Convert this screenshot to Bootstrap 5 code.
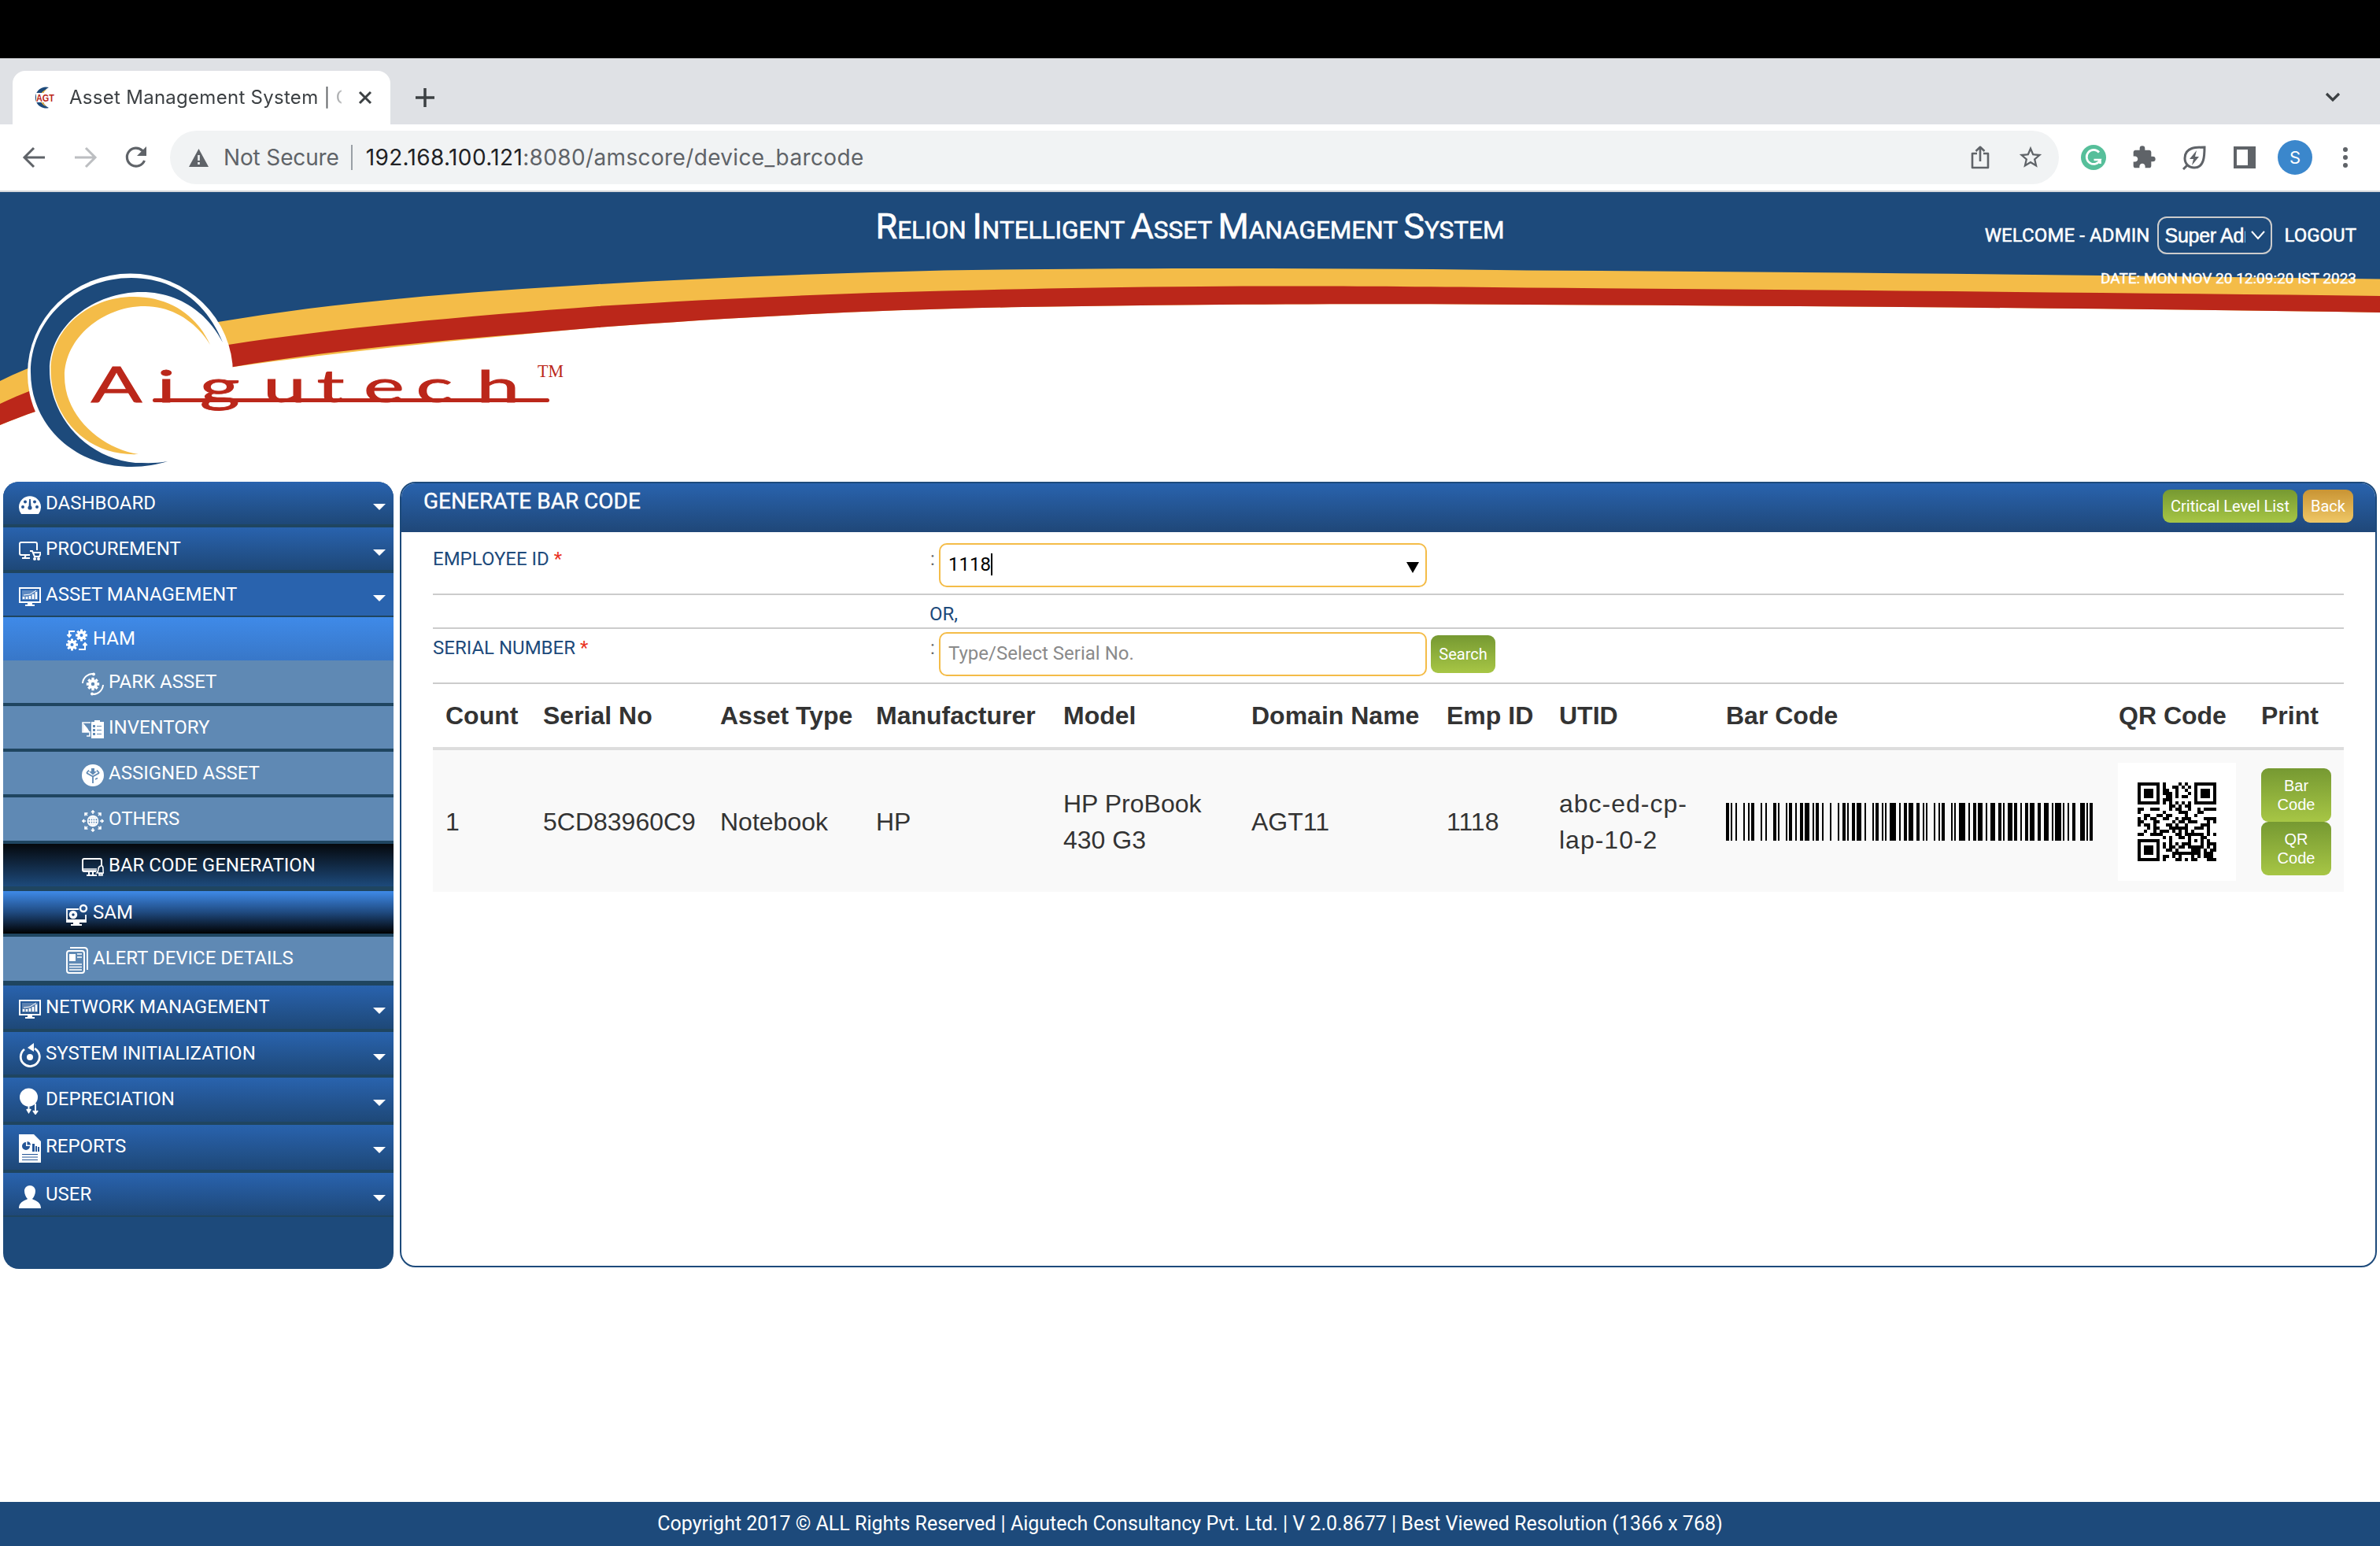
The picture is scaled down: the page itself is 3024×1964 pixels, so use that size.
<!DOCTYPE html>
<html lang="en">
<head>
<meta charset="utf-8">
<title>Asset Management System | Generate Bar Code</title>
<link href="https://cdn.jsdelivr.net/npm/bootstrap@5.3.0/dist/css/bootstrap.min.css" rel="stylesheet">
<style>
body{font-family:Roboto,"Liberation Sans",sans-serif;font-size:24px;line-height:28px;width:3024px;height:1964px;overflow:hidden;background:#fff;color:#333}
svg{display:block;flex:none}
.ui{font-family:Inter,"Liberation Sans",sans-serif}
.notch{height:74px;background:#000}
.tabstrip{height:84px;background:#dfe1e5;padding:16px 50px 0 16px}
.tab{position:relative;width:480px;height:68px;background:#fff;border-radius:16px 16px 0 0;padding:0 22px 0 25px}
.tabtitle{width:346px;font-size:24px;letter-spacing:.28px;color:#3c4043;white-space:nowrap;overflow:hidden;margin-left:17px;-webkit-mask-image:linear-gradient(90deg,#000 322px,transparent 356px)}
.newtab{margin:21px 0 0 31px}.tabmenu{margin-top:27px}
.toolbar{height:86px;border-bottom:2px solid #d6d8dc;padding:0 30px 0 28px}
.i-fwd{margin-left:36px}.i-reload{margin-left:34px}.i-star{margin-left:35px}
.i-gram{margin:0 32px 0 28px}.i-leaf{margin:0 34px 0 32px}
.omni{width:2400px;height:68px;border-radius:34px;background:#f1f3f4;margin-left:28px;padding:0 19px 0 24px;font-size:28px;color:#5f6368}
.omni .sep{width:2px;height:32px;background:#9aa0a6;margin:0 17px 0 15px}
.insecure{margin-left:19px;letter-spacing:-.15px}
.url{letter-spacing:.36px}.url b{font-weight:400;color:#202124}
.avatar-s{width:44px;height:44px;border-radius:50%;background:#3b87cc;color:#fff;font-size:22px;margin:0 28px}
.banner{height:368px;position:relative}
.banner>svg{position:absolute;left:0;top:0}
.banner-top{position:relative;height:130px;color:#fff}
.apptitle{position:absolute;left:0;right:0;top:16px;text-align:center;text-transform:uppercase;font-size:31.500px;line-height:56px;-webkit-text-stroke:.6px #fff}
.apptitle b{font-weight:400;font-size:45px}
.userbox{position:absolute;right:30px;top:31px;font-size:24px;-webkit-text-stroke:.5px #fff}
.userbox .who{letter-spacing:.1px}
.datebox{position:absolute;right:30px;top:96px;font-size:19px;-webkit-text-stroke:.4px #fff}
.rolesel{width:146px;height:48px;border:2px solid #ccc;border-radius:12px;margin:0 16px 0 9px;padding:0 7px 0 8px;font-family:"Liberation Sans",sans-serif;font-size:25px}
.rolesel span{width:102px;overflow:hidden;white-space:nowrap;letter-spacing:-.3px}
.sidebar{width:496px;height:1000px;margin-left:4px;border-radius:20px;background:#1d4a7b;overflow:hidden;color:#fff}
.mi{border-bottom:4px solid #1f4560;padding:13px 10px 0 20px;background:linear-gradient(#2963ae,#1e4878);height:58px}
.mi .ic{width:28px;height:34px;margin-right:6px;display:flex;align-items:center}
.caret{width:0;height:0;border:8px solid transparent;border-top-color:#fff;border-bottom:0;margin:15px 0 0 auto}
.lvl2{padding-left:80px;background:#5f89b4}.lvl3{padding-left:100px;background:#5f89b4}
.h59{height:59px}.h60{height:60px}.h61{height:61px}
.mi-open{background:#2963ae;border-bottom-width:2px;height:56px}
.mi-ham{background:linear-gradient(#3f8ae8,#3877c8);border:0;height:55px}
.mi-now{background:linear-gradient(#05080c,#1d4a7b);border-bottom-width:6px;height:60px}
.mi-sam{background:linear-gradient(#3f8ae8,#1f4a80 50%,#000)}
.mi-alert{border-bottom-width:6px;height:62px}
.mi-last{height:56px;border-bottom-width:2px}
.panel{width:2512px;height:998px;border:2px solid #1d4a7b;border-radius:20px;margin-left:8px;overflow:hidden}
.panelhead{height:62px;background:linear-gradient(#2963ae,#1f4778);color:#fff;padding:0 28px}
.panelhead h1{font-size:28px;line-height:32px;margin:7px 0 0;font-weight:400;-webkit-text-stroke:.4px #fff}
.gbtn{border:0;border-radius:9px;color:#fff;background:linear-gradient(#769932,#a7c645);font-size:20px;line-height:24px;text-align:center;padding:0}
.b-crit{width:171px;height:42px;margin-top:8px}
.b-back{width:64px;height:42px;margin:8px 0 0 7px;background:linear-gradient(#c99434,#efc766)}
.b-find{width:82px;height:48px;margin:8px 0 0 5px}
.b-print{width:89px;height:68px}
.formarea{margin:0 40px;color:#1d4a7b}
.frow{border-bottom:2px solid #ccc}
.f-emp{height:80px}.f-or{height:43px}.f-ser{height:70px}
.flabel{width:632px}.fcolon{width:11px;color:#666}
.f-emp .flabel,.f-emp .fcolon{padding-top:20px}
.f-ser .flabel,.f-ser .fcolon{padding-top:10px}
.f-or div{padding:10px 0 0 631px}
.finput{width:620px;height:56px;border:2px solid #f4bc48;border-radius:10px;padding:0 8px 3px 10px;color:#000}
.f-emp .finput{margin-top:14px}.f-ser .finput{margin-top:4px;color:#8a8a8a}
.req{color:#ea3323}
.caretline{width:2px;height:28px;background:#000}
.devices{font-family:"Liberation Sans",sans-serif;font-size:32px;line-height:46px;color:#333;table-layout:fixed;width:2428px;margin:0}
.devices th,.devices td{padding:0 16px;vertical-align:middle;border:0;color:#333;box-shadow:none;white-space:nowrap}
.devices th{height:82px;border-bottom:4px solid #ddd;background:#fff}
.devices td{height:182px;background:#f9f9f9;padding-top:1px}
.devices td.utid{letter-spacing:1px}.devices td.qrcell{padding-left:15px}
.w1{width:124px}.w2{width:225px}.w3{width:198px}.w4{width:238px}.w5{width:239px}.w6{width:248px}.w7{width:143px}.w8{width:212px}.w9{width:499px}.w10{width:181px}.w11{width:121px}
.qrbox{width:150px;height:150px;background:#fff;padding:25px}
.pagefoot{height:56px;background:#1d4a7b;color:#fff;font-size:25px;line-height:55px;text-align:center;margin-top:296px}
</style>
</head>
<body>
<div class="notch"></div>
<div class="tabstrip ui d-flex align-items-start">
  <div class="tab d-flex align-items-center">
    <svg width="30" height="30" viewBox="0 0 30 30"><path d="M21 2A13.500 13.500 0 1 0 21 28A14.500 14.500 0 0 1 21 2" fill="#1d4a7b"/><path d="M19 4.500A11 11 0 0 0 18 26A12.500 12.500 0 0 1 19 4.500" fill="#f4b942"/><path d="M5 9h24v12H5z" fill="#fff"/><text x="5" y="19.500" font-family="Liberation Sans" font-weight="700" font-size="12" textLength="23" lengthAdjust="spacingAndGlyphs" fill="#bb271a">AGT</text></svg>
    <div class="tabtitle">Asset Management System | Generate</div>
    <svg class="ms-auto" width="20" height="20" viewBox="0 0 20 20"><path d="M3 3l14 14M17 3L3 17" stroke="#3c4043" stroke-width="3"/></svg>
  </div>
  <svg class="newtab" width="26" height="26" viewBox="0 0 26 26"><path d="M13 1v24M1 13h24" stroke="#3c4043" stroke-width="3.500"/></svg>
  <svg class="tabmenu ms-auto" width="20" height="14" viewBox="0 0 20 14"><path d="M2 2l8 8 8-8" stroke="#3c4043" stroke-width="3.200" fill="none"/></svg>
</div>
<div class="toolbar ui d-flex align-items-center">
  <svg width="30" height="28" viewBox="0 0 30 28"><path d="M29 14H4M15 2L3 14l12 12" fill="none" stroke="#5f6368" stroke-width="3"/></svg>
  <svg class="i-fwd" width="30" height="28" viewBox="0 0 30 28"><path d="M1 14h25M15 2l12 12-12 12" fill="none" stroke="#bcbec1" stroke-width="3"/></svg>
  <svg class="i-reload" width="30" height="30" viewBox="0 0 30 30"><path d="M25.500 19A11.500 11.500 0 1 1 23 6.500L26 10" fill="none" stroke="#5f6368" stroke-width="3.200"/><path d="M28 1v12H16z" fill="#5f6368"/></svg>
  <div class="omni d-flex align-items-center">
    <svg width="25" height="23" viewBox="0 0 25 23"><path d="M12.500 0L25 23H0z" fill="#5f6368"/><path d="M12.500 8v7M12.500 17v3" stroke="#f1f3f4" stroke-width="2.600"/></svg>
    <span class="insecure">Not Secure</span><span class="sep"></span>
    <span class="url"><b>192.168.100.121</b>:8080/amscore/device_barcode</span>
    <svg class="ms-auto" width="24" height="30" viewBox="0 0 24 30"><path d="M8 10H2v18h20V10h-6M12 20V2M6.500 7L12 1.800 17.500 7" fill="none" stroke="#5f6368" stroke-width="2.600" stroke-linejoin="round"/></svg>
    <svg class="i-star" width="34" height="34" viewBox="0 0 24 24"><path d="M22 9.240l-7.190-.62L12 2 9.190 8.630 2 9.240l5.460 4.730L5.820 21 12 17.270 18.180 21l-1.630-7.030L22 9.240zM12 15.400l-3.760 2.270 1-4.280-3.320-2.880 4.380-.38L12 6.100l1.710 4.040 4.380.38-3.320 2.880 1 4.280L12 15.400z" fill="#5f6368"/></svg>
  </div>
  <svg class="i-gram" width="32" height="32" viewBox="0 0 32 32"><circle cx="16" cy="16" r="16" fill="#56bf9a"/><path d="M23 9.500A9 9 0 1 0 24.500 19H16.500M24.500 18v6" fill="none" stroke="#fff" stroke-width="2.700"/></svg>
  <svg width="32" height="32" viewBox="0 0 24 24"><path d="M20.500 11H19V7c0-1.100-.9-2-2-2h-4V3.500a2.500 2.500 0 0 0-5 0V5H4c-1.100 0-1.990.9-1.990 2v3.800H3.500c1.490 0 2.700 1.210 2.700 2.700s-1.210 2.700-2.700 2.700H2V20c0 1.100.9 2 2 2h3.800v-1.500c0-1.490 1.210-2.700 2.700-2.700s2.700 1.210 2.700 2.700V22H17c1.100 0 2-.9 2-2v-4h1.500a2.500 2.500 0 0 0 0-5z" fill="#5f6368"/></svg>
  <svg class="i-leaf" width="32" height="32" viewBox="0 0 32 32"><path d="M29 3C18 3 4 3 4 17c0 7 5 12 12 12C29 29 29 13 29 3zM2 31l6-6" fill="none" stroke="#5f6368" stroke-width="3"/><path d="M19 7L10 18h5l-2 8 9-11h-5z" fill="#5f6368"/></svg>
  <svg width="28" height="28" viewBox="0 0 28 28"><path d="M0 0h28v28H0zM4 4v20h14V4z" fill-rule="evenodd" fill="#5f6368"/></svg>
  <div class="avatar-s d-flex align-items-center justify-content-center">S</div>
  <svg width="28" height="28" viewBox="0 0 28 28" fill="#5f6368"><circle cx="14" cy="4" r="3"/><circle cx="14" cy="14" r="3"/><circle cx="14" cy="24" r="3"/></svg>
</div>

<div class="banner">
  <svg width="3024" height="368" viewBox="0 244 3024 368">
    <path d="M0 244H3024V356C2700 350 2350 347 2000 345C1700 341 1400 341 1200 344.500C1050 348 900 354 760 362C590 372 430 384 277 410C180 428 90 441 0 485z" fill="#1d4a7b"/>
    <path d="M0 484C90 440 180 427 277 409C430 383 590 371 760 361C900 353 1050 347 1200 343.500C1400 340 1700 340 1940 343.500C2350 346 2700 350 3024 354.500V397C2700 392 2350 389 1940 387C1700 385 1500 387 1300 390C1100 394 930 403 760 416C600 430 450 445 297 466C190 487 95 500 0 540z" fill="#f4bc48"/>
    <path d="M0 513C90 470 190 456 290 438C430 416 600 401 760 389C900 380 1050 373 1200 369.500C1400 364 1600 361.500 1940 365.500C2350 368.500 2700 372 3024 376V397C2700 392 2350 389 1940 387C1700 385 1500 387 1300 390C1100 394 930 403 760 416C600 430 450 440 297 466C190 487 95 500 0 540z" fill="#bb271a"/>
    <ellipse cx="165.500" cy="474.500" rx="130.500" ry="127" fill="#fff"/>
    <path d="M283 435C262 383 220 353 167 353C95 353 39 407 39 473C39 540 95 593 167 593C185 593 200 590 213 586C200 589 185 588 172 588C110 582 63 530 63 470C63 413 120 371 180 371C225 371 262 395 283 435z" fill="#1d4a7b"/>
    <path d="M267 438C250 400 215 377 170 377C110 377 64.500 420 64.500 470C64.500 530 110 580 176 577C130 570 82 530 82 478C82 430 130 389 184 389C220 389 250 410 267 438z" fill="#f4bc48"/>
    <g fill="#bb271a" stroke="#bb271a">
      <text transform="translate(0 511) scale(1.550 1)" x="74.500" y="0" font-family="Lato" font-size="62" stroke-width=".8">A</text>
      <text transform="translate(0 511) scale(1.750 1)" x="114 145 191 230 264 302 346" y="0" font-family="Lato" font-size="56" stroke-width=".8">igutech</text>
      <rect x="194" y="506" width="504" height="5" rx="2.500" stroke="none"/>
      <text x="683" y="479" font-family="Liberation Serif" font-size="24" textLength="33" lengthAdjust="spacingAndGlyphs" stroke="none">TM</text>
    </g>
  </svg>
  <div class="banner-top">
    <div class="apptitle"><b>R</b>elion <b>I</b>ntelligent <b>A</b>sset <b>M</b>anagement <b>S</b>ystem</div>
    <div class="userbox d-flex align-items-center"><span class="who">WELCOME - ADMIN</span><div class="rolesel d-flex align-items-center justify-content-between"><span>Super Admin</span><svg width="18" height="12" viewBox="0 0 18 12"><path d="M1 1l8 9 8-9" fill="none" stroke="#fff" stroke-width="2"/></svg></div>LOGOUT</div>
    <div class="datebox">DATE: MON NOV 20 12:09:20 IST 2023</div>
  </div>
</div>

<svg class="position-absolute" width="0" height="0"><defs>
  <g id="gear"><circle r="5" fill="none" stroke="#fff" stroke-width="4.500"/><path d="M0-10v4M0 10v-4M-10 0h4M10 0h-4M-7-7l3 3M7 7l-3-3M-7 7l3-3M7-7l-3 3" stroke="#fff" stroke-width="4"/></g>
  <symbol id="chartmon" viewBox="0 0 28 24"><path d="M1 1h26v18H1z" fill="none" stroke="#fff" stroke-width="2"/><path d="M4 4h20v12H4z" fill="#fff" opacity=".25"/><path d="M6 15v-3M10 15v-3M14 15v-4M18 15V9M22 15V6" stroke="#fff" stroke-width="2.500"/><path d="M6 10l8-1 8-5" stroke="#fff" fill="none"/><path d="M11 19h6v3h3v2H8v-2h3z" fill="#fff"/></symbol>
</defs></svg>

<div class="d-flex align-items-start">
  <nav class="sidebar">
    <div class="mi d-flex"><span class="ic"><svg width="28" height="24" viewBox="0 0 28 24"><path d="M3 23A14 14 0 1 1 25 23z" fill="#fff"/><g fill="#245391"><circle cx="5" cy="14" r="2"/><circle cx="8" cy="7.500" r="2"/><circle cx="20" cy="7.500" r="2"/><circle cx="23" cy="14" r="2"/><circle cx="14" cy="15" r="2.600"/><path d="M13.200 4h1.600l.8 11h-3.200z"/></g></svg></span>DASHBOARD<i class="caret"></i></div>
    <div class="mi d-flex"><span class="ic"><svg width="28" height="24" viewBox="0 0 28 24" fill="none" stroke="#fff" stroke-width="2"><path d="M14 17H3q-2 0-2-2V3q0-2 2-2h18q2 0 2 2v8M4 21h10M9 17l-2 4M14 12h3l3 7h6l2-5H18"/><circle cx="20" cy="22" r="1"/><circle cx="25" cy="22" r="1"/></svg></span>PROCUREMENT<i class="caret"></i></div>
    <div class="mi mi-open d-flex"><span class="ic"><svg width="28" height="24"><use href="#chartmon"/></svg></span>ASSET MANAGEMENT<i class="caret"></i></div>
    <div class="mi lvl2 mi-ham d-flex"><span class="ic"><svg width="28" height="30" viewBox="0 0 28 30"><use href="#gear" transform="translate(19.500 8) scale(.75)"/><use href="#gear" transform="translate(7.500 20) scale(.75)"/><path d="M11 3H4v6M1.500 7L4 10l2.500-3M16 26h8v-7M21.500 21L24 18l2.500 3" fill="none" stroke="#fff" stroke-width="2"/></svg></span>HAM</div>
    <div class="mi lvl3 d-flex"><span class="ic"><svg width="28" height="30" viewBox="0 0 28 30"><use href="#gear" transform="translate(14 15) scale(.82)"/><path d="M1 14A13 13 0 0 1 15 2M27 16A13 13 0 0 1 13 28" fill="none" stroke="#fff" stroke-width="2"/><circle cx="15" cy="2.500" r="2" fill="#fff"/><circle cx="13" cy="27.500" r="2" fill="#fff"/></svg></span>PARK ASSET</div>
    <div class="mi lvl3 d-flex"><span class="ic"><svg width="28" height="24" viewBox="0 0 28 24"><path d="M11 3H1v12h10M6 20h4v-4" fill="none" stroke="#fff" stroke-width="1.600"/><path d="M2 4l5 6 3 5H2z" fill="#fff"/><path d="M12 2h4V0h7v2h5v21H12z" fill="#fff"/><path d="M14 6h3v3h-3zM14 11h3v3h-3zM14 16h3v3h-3zM19 7h6v1h-6zM19 12h6v1h-6zM19 17h6v1h-6z" fill="#5f89b4"/></svg></span>INVENTORY</div>
    <div class="mi lvl3 d-flex"><span class="ic"><svg width="28" height="28" viewBox="0 0 28 28"><circle cx="14" cy="14" r="14" fill="#fff"/><path d="M6 11l8 4.500 8-4.500M14 16v8M6 11l3-3.500M22 11l-3-3.500" fill="none" stroke="#5f89b4" stroke-width="1.800"/><path d="M17 19l3-1.500" stroke="#5f89b4" stroke-width="1.400"/><path d="M12 5h4v4h3L14 13.500 9 9h3z" fill="#5f89b4"/></svg></span>ASSIGNED ASSET</div>
    <div class="mi lvl3 h59 d-flex"><span class="ic"><svg width="28" height="28" viewBox="0 0 28 28" fill="none" stroke="#fff" stroke-width="1.600"><circle cx="14" cy="14" r="6.500"/><ellipse cx="14" cy="14" rx="3" ry="6.500"/><path d="M7.500 14h13M14 7.500v13M9 10.500h10M9 17.500h10"/><path d="M14 5V1M12 3l2-2 2 2M14 23v4M12 25l2 2 2-2M5 14H1M3 12l-2 2 2 2M23 14h4M25 12l2 2-2 2M7 7L4.500 4.500M4 7.500V4h3.500M21 7l2.500-2.500M20.500 4H24v3.500M7 21l-2.500 2.500M4 20.500V24h3.500M21 21l2.500 2.500M20.500 24H24v-3.500"/></svg></span>OTHERS</div>
    <div class="mi lvl3 mi-now d-flex"><span class="ic"><svg width="28" height="24" viewBox="0 0 28 24"><path d="M18 17H3q-2 0-2-2V3q0-2 2-2h20q2 0 2 2v6" fill="none" stroke="#fff" stroke-width="2"/><path d="M2 13h17v4H2z" fill="#fff" opacity=".7"/><path d="M9 17v4M14 17v4M6 22h13" stroke="#fff" stroke-width="2"/><path d="M19 19q2-2 2-5t3-4 3 4 1 5zM22 20h4v2h-4z" fill="none" stroke="#fff" stroke-width="1.600"/></svg></span>BAR CODE GENERATION</div>
    <div class="mi lvl2 mi-sam d-flex"><span class="ic"><svg width="28" height="28" viewBox="0 0 28 28"><path d="M16 7H1v16h24V14" fill="none" stroke="#fff" stroke-width="1.800"/><circle cx="9" cy="14" r="3.500" fill="none" stroke="#fff" stroke-width="3.500"/><circle cx="22" cy="6" r="4" fill="none" stroke="#fff" stroke-width="2.500"/><path d="M1 20h24v3H1zM9 23h8v3h3v2H6v-2h3z" fill="#fff"/></svg></span>SAM</div>
    <div class="mi lvl2 mi-alert d-flex"><span class="ic"><svg width="28" height="34" viewBox="0 0 28 34"><path d="M5 1h18q4 0 4 4v24" fill="none" stroke="#fff" stroke-width="2"/><rect x="1" y="5" width="22" height="28" rx="3" fill="none" stroke="#fff" stroke-width="2"/><path d="M4 9h8v9H4z" fill="#fff"/><path d="M14 9h6M14 13h6M4 22h16M4 25.500h16M4 29h16" stroke="#fff" stroke-width="1.600"/></svg></span>ALERT DEVICE DETAILS</div>
    <div class="mi h59 d-flex"><span class="ic"><svg width="28" height="24"><use href="#chartmon"/></svg></span>NETWORK MANAGEMENT<i class="caret"></i></div>
    <div class="mi d-flex"><span class="ic"><svg width="28" height="32" viewBox="0 0 28 32"><path d="M7 8A12 12 0 1 0 20 7" fill="none" stroke="#fff" stroke-width="2.800"/><path d="M19 0v11L11 6z" fill="#fff"/><circle cx="14" cy="18" r="4" fill="#fff"/></svg></span>SYSTEM INITIALIZATION<i class="caret"></i></div>
    <div class="mi h60 d-flex"><span class="ic"><svg width="28" height="34" viewBox="0 0 28 34"><circle cx="12.500" cy="12" r="11.500" fill="#fff"/><path d="M12.500 22v8M21 20v13M10 27l2.500 4 2.500-4M18 29l3 4 3-4" stroke="#fff" stroke-width="2" fill="#fff"/></svg></span>DEPRECIATION<i class="caret"></i></div>
    <div class="mi h61 d-flex"><span class="ic"><svg width="28" height="36" viewBox="0 0 28 36"><path d="M0 0h19l9 9v27H0z" fill="#fff"/><g fill="#255697"><path d="M9 10a5 5 0 1 0 5 5H9z"/><path d="M10.500 9v4.500H15A5 5 0 0 0 10.500 9z"/><path d="M17 12h3v10h-3zM21 15h2v7h-2zM24 16h2v6h-2zM4 25h20v1H4zM4 28.500h20v1H4zM4 32h20v1H4z"/></g></svg></span>REPORTS<i class="caret"></i></div>
    <div class="mi mi-last d-flex"><span class="ic"><svg width="28" height="29" viewBox="0 0 28 29"><path d="M14 0c4 0 7 3 7 7s-2 8-4 10c2 2 11 3 11 12H0c0-9 9-10 11-12-2-2-4-6-4-10s3-7 7-7z" fill="#fff"/></svg></span>USER<i class="caret"></i></div>
  </nav>

  <main class="panel">
    <div class="panelhead d-flex align-items-start">
      <h1>GENERATE BAR CODE</h1>
      <button class="btn gbtn b-crit ms-auto">Critical Level List</button>
      <button class="btn gbtn b-back">Back</button>
    </div>
    <div class="formarea">
      <div class="frow f-emp d-flex">
        <div class="flabel">EMPLOYEE ID <span class="req">*</span></div><div class="fcolon">:</div>
        <div class="finput d-flex align-items-center"><span>1118</span><span class="caretline"></span><svg class="ms-auto mt-2" width="16" height="14" viewBox="0 0 16 14"><path d="M0 0h16L8 14z"/></svg></div>
      </div>
      <div class="frow f-or"><div>OR,</div></div>
      <div class="frow f-ser d-flex">
        <div class="flabel">SERIAL NUMBER <span class="req">*</span></div><div class="fcolon">:</div>
        <div class="finput d-flex align-items-center">Type/Select Serial No.</div>
        <button class="btn gbtn b-find">Search</button>
      </div>
      <table class="table devices">
        <colgroup><col class="w1"><col class="w2"><col class="w3"><col class="w4"><col class="w5"><col class="w6"><col class="w7"><col class="w8"><col class="w9"><col class="w10"><col class="w11"></colgroup>
        <thead><tr><th>Count</th><th>Serial No</th><th>Asset Type</th><th>Manufacturer</th><th>Model</th><th>Domain Name</th><th>Emp ID</th><th>UTID</th><th>Bar Code</th><th>QR Code</th><th>Print</th></tr></thead>
        <tbody><tr><td>1</td><td>5CD83960C9</td><td>Notebook</td><td>HP</td><td>HP ProBook<br>430 G3</td><td>AGT11</td><td>1118</td><td class="utid">abc-ed-cp-<br>lap-10-2</td>
          <td><svg id="bars" width="466" height="48" viewBox="0 0 233 48" preserveAspectRatio="none" shape-rendering="crispEdges"></svg></td>
          <td class="qrcell"><div class="qrbox"><svg id="qr" width="100" height="100" viewBox="0 0 25 25" shape-rendering="crispEdges"></svg></div></td>
          <td><button class="btn gbtn b-print d-block">Bar<br>Code</button><button class="btn gbtn b-print d-block">QR<br>Code</button></td></tr></tbody>
      </table>
    </div>
  </main>
</div>
<footer class="pagefoot">Copyright 2017 © ALL Rights Reserved | Aigutech Consultancy Pvt. Ltd. | V 2.0.8677 | Best Viewed Resolution (1366 x 768)</footer>
<script src="https://cdn.jsdelivr.net/npm/bootstrap@5.3.0/dist/js/bootstrap.bundle.min.js"></script>
<script>
const UTID = 'abc-ed-cp-lap-10-2';

// Code 128, set B
(function(){
  const P='212222 222122 222221 121223 121322 131222 122213 122312 132212 221213 221312 231212 112232 122132 122231 113222 123122 123221 223211 221132 221231 213212 223112 312131 311222 321122 321221 312212 322112 322211 212123 212321 232121 111323 131123 131321 112313 132113 132311 211313 231113 231311 112133 112331 132131 113123 113321 133121 313121 211331 231131 213113 213311 213131 311123 311321 331121 312113 312311 332111 314111 221411 431111 111224 111422 121124 121421 141122 141221 112214 112412 122114 122411 142112 142211 241211 221114 413111 241112 134111 111242 121142 121241 114212 124112 124211 411212 421112 421211 212141 214121 412121 111143 111341 131141 114113 114311 411113 411311 113141 114131 311141 411131 211412 211214 211232'.split(' ');
  const v=[...UTID].map(c=>c.charCodeAt(0)-32);
  const sum=v.reduce((a,x,i)=>a+x*(i+1),104)%103;
  const w=[104,...v,sum].map(x=>P[x]).join('')+'2331112';
  let x=0,d='';
  [...w].forEach((c,i)=>{c=+c;if(i%2==0)d+=`M${x} 0h${c}v48h-${c}z`;x+=c;});
  document.getElementById('bars').innerHTML=`<path d="${d}"/>`;
})();

// QR version 2-L, byte mode
function qrMatrix(text,k){
  const N=25,exp=[],log=[];let z=1;
  for(let i=0;i<255;i++){exp[i]=z;log[z]=i;z<<=1;if(z&256)z^=0x11d;}
  const mul=(a,b)=>a&&b?exp[(log[a]+log[b])%255]:0;
  let bits='0100'+text.length.toString(2).padStart(8,'0')+[...text].map(c=>c.charCodeAt(0).toString(2).padStart(8,'0')).join('')+'0000';
  const data=bits.match(/.{8}/g).map(b=>parseInt(b,2));
  for(let i=0;data.length<34;i++)data.push(i%2?17:236);
  let g=[1];
  for(let i=0;i<10;i++){const n=Array(g.length+1).fill(0);g.forEach((c,j)=>{n[j]^=c;n[j+1]^=mul(c,exp[i]);});g=n;}
  const r=data.concat(Array(10).fill(0));
  for(let i=0;i<34;i++){const f=r[i];if(f)g.forEach((c,j)=>r[i+j]^=mul(c,f));}
  const stream=data.concat(r.slice(34)).map(b=>b.toString(2).padStart(8,'0')).join('');
  const masks=[(i,j)=>(i+j)%2,(i,j)=>i%2,(i,j)=>j%3,(i,j)=>(i+j)%3,(i,j)=>((i>>1)+Math.floor(j/3))%2,(i,j)=>i*j%2+i*j%3,(i,j)=>(i*j%2+i*j%3)%2,(i,j)=>((i+j)%2+i*j%3)%2];
  const m=Array.from({length:N},()=>Array(N).fill(null));
  const finder=(y,x)=>{for(let i=-1;i<8;i++)for(let j=-1;j<8;j++){const a=y+i,b=x+j;if(a<0||b<0||a>=N||b>=N)continue;
    const e=Math.max(Math.abs(i-3),Math.abs(j-3));m[a][b]=(e==3||e<2)?1:0;}};
  finder(0,0);finder(0,N-7);finder(N-7,0);
  for(let i=-2;i<3;i++)for(let j=-2;j<3;j++)m[18+i][18+j]=Math.max(Math.abs(i),Math.abs(j))==1?0:1;
  for(let i=8;i<N-8;i++)m[6][i]=m[i][6]=(i+1)%2;
  let f=(1<<3|k)<<10,q=f;
  for(let i=14;i>=10;i--)if(q>>i&1)q^=0x537<<(i-10);
  f=(f|q)^0x5412;
  for(let i=0;i<15;i++){const b=f>>i&1;
    if(i<6)m[i][8]=b;else if(i<8)m[i+1][8]=b;else m[N-15+i][8]=b;
    if(i<8)m[8][N-1-i]=b;else if(i==8)m[8][7]=b;else m[8][14-i]=b;}
  m[N-8][8]=1;
  let p=0,up=true;
  for(let c=N-1;c>0;c-=2){if(c==6)c--;
    for(let s=0;s<N;s++){const y=up?N-1-s:s;for(const x of[c,c-1])if(m[y][x]===null){let b=p<stream.length?+stream[p]:0;p++;if(masks[k](y,x)==0)b^=1;m[y][x]=b;}}
    up=!up;}
  return m;
}
document.getElementById('qr').innerHTML='<path d="'+qrMatrix(UTID,4).map((r,y)=>r.map((b,x)=>b?`M${x} ${y}h1v1h-1z`:'').join('')).join('')+'"/>';
</script>
</body>
</html>
